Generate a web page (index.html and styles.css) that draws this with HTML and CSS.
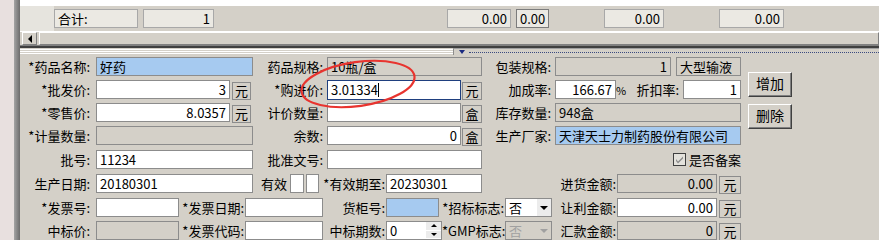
FILE: index.html
```html
<!DOCTYPE html>
<html>
  <head>
    <meta charset="utf-8">
    <title>药品入库</title>
    <link rel="stylesheet" href="styles.css">
  </head>
  <body>
    <div class="app">
      <div class="side"></div>
      <div class="edge"></div>
      <div class="main">
        <div class="grid-blank"></div>
        <div class="sum-row">
          <div class="ind"></div>
          <div class="cell c-title">合计:</div>
          <div class="cell num c-count">1</div>
          <div class="cell num c-amt1">0.00</div>
          <div class="cell num dark c-amt2">0.00</div>
          <div class="cell num c-amt3">0.00</div>
          <div class="cell num c-amt4">0.00</div>
        </div>
        <div class="hscroll">
          <div class="arrow-btn"><span class="tri-left"></span></div>
          <div class="thumb"></div>
        </div>
        <div class="dark-line"></div>
        <div class="splitter">
          <div class="grip"></div>
          <div class="handle"><span class="tri-blue"></span><span class="dots"></span></div>
        </div>

        <div class="form">
          <div class="fields">
            <div class="row">
              <div class="lbl w74">*药品名称:</div>
              <div class="fld bl w157 ml2">好药</div>
              <div class="lbl w74">药品规格:</div>
              <div class="fld ro w155">10瓶/盒</div>
              <div class="lbl w73">包装规格:</div>
              <div class="fld ro num w116">1</div>
              <div class="fld ro w65 ml5">大型输液</div>
            </div>
            <div class="row">
              <div class="lbl w74">*批发价:</div>
              <div class="fld wh num w134 ml2">3</div>
              <div class="unit w19 ml2">元</div>
              <div class="lbl w76">*购进价:</div>
              <div class="fld wh focus w134">3.01334<span class="caret"></span></div>
              <div class="unit w20 ml1">元</div>
              <div class="lbl w73">加成率:</div>
              <div class="fld wh num w61">166.67</div>
              <div class="pct">%</div>
              <div class="lbl w57">折扣率:</div>
              <div class="fld wh num w58">1</div>
            </div>
            <div class="row">
              <div class="lbl w74">*零售价:</div>
              <div class="fld wh num w134 ml2">8.0357</div>
              <div class="unit w19 ml2">元</div>
              <div class="lbl w76">计价数量:</div>
              <div class="fld wh w134"></div>
              <div class="unit w20 ml1">盒</div>
              <div class="lbl w73">库存数量:</div>
              <div class="fld ro w186">948盒</div>
            </div>
            <div class="row">
              <div class="lbl w74">*计量数量:</div>
              <div class="fld ro w157 ml2"></div>
              <div class="lbl w74">余数:</div>
              <div class="fld wh num w134">0</div>
              <div class="unit w20 ml1">盒</div>
              <div class="lbl w73">生产厂家:</div>
              <div class="fld bl w186">天津天士力制药股份有限公司</div>
            </div>
            <div class="row sp">
              <div class="lbl w74">批号:</div>
              <div class="fld wh w157 ml2">11234</div>
              <div class="lbl w74">批准文号:</div>
              <div class="fld wh w155"></div>
              <div class="check">
                <svg class="chk" width="13" height="13" viewBox="0 0 13 13">
                  <rect x="0.5" y="0.5" width="12" height="12" fill="#e4e2dc" stroke="#404040"/>
                  <path d="M3 6 L5 8.5 L10 3.5 L10 5.5 L5 10.5 L3 8 Z" fill="#8c8c8c"/>
                </svg>
                <span>是否备案</span>
              </div>
            </div>
            <div class="row sp">
              <div class="lbl w74">生产日期:</div>
              <div class="fld wh w157 ml2">20180301</div>
              <div class="lbl-l w37">有效</div>
              <div class="fld wh w14"></div>
              <div class="fld wh w13 ml2"></div>
              <div class="lbl tight w67">*有效期至:</div>
              <div class="fld wh w96">20230301</div>
              <div class="lbl tight w135">进货金额:</div>
              <div class="fld ro num w100">0.00</div>
              <div class="unit w22 ml2">元</div>
            </div>
            <div class="row sp">
              <div class="lbl w74">*发票号:</div>
              <div class="fld wh w83 ml2"></div>
              <div class="lbl tight w66">*发票日期:</div>
              <div class="fld wh w78"></div>
              <div class="lbl tight w63">货柜号:</div>
              <div class="fld bl w53"></div>
              <div class="lbl tight w66">*招标标志:</div>
              <div class="sel w47">
                <span class="sel-text">否</span>
                <span class="sel-btn"><span class="tri-down"></span></span>
              </div>
              <div class="lbl tight w65">让利金额:</div>
              <div class="fld wh num w100">0.00</div>
              <div class="unit w22 ml2">元</div>
            </div>
            <div class="row">
              <div class="lbl w74">中标价:</div>
              <div class="fld ro w83 ml2"></div>
              <div class="lbl tight w66">*发票代码:</div>
              <div class="fld wh w78"></div>
              <div class="lbl tight w63">中标期数:</div>
              <div class="spin w56">
                <span class="spin-text">0</span>
                <span class="spin-btns">
                  <span class="spin-b"><span class="tri-up"></span></span>
                  <span class="spin-b"><span class="tri-down"></span></span>
                </span>
              </div>
              <div class="lbl tight w63">*GMP标志:</div>
              <div class="sel off w47">
                <span class="sel-text">否</span>
                <span class="sel-btn"><span class="tri-down"></span></span>
              </div>
              <div class="lbl tight w65">汇款金额:</div>
              <div class="fld ro num w100">0</div>
              <div class="unit w22 ml2">元</div>
            </div>
          </div>

          <div class="buttons">
            <div class="btn">增加</div>
            <div class="btn">删除</div>
          </div>
        </div>
      </div>
    </div>

    <!-- red annotation circle drawn over the form -->
    <svg class="mark" width="130" height="60" viewBox="0 0 130 60">
      <ellipse cx="63" cy="29" rx="57" ry="22" transform="rotate(-8 63 29)" fill="none" stroke="#e8342f" stroke-width="2.2"/>
    </svg>
  </body>
</html>
```

FILE: styles.css
```css
body {
  margin: 0;
  background-color: #d4d0c8;
  font-family: "Noto Sans CJK SC", sans-serif;
  font-size: 13px;
  color: #000;
  overflow: hidden;
}
.app {
  display: flex;
  height: 240px;
}
.side {
  width: 14px;
  background-color: #e8e0df;
}
.edge {
  width: 6px;
  background: linear-gradient(to right, #a4a4a4, #6c6c6c);
}
.main {
  flex: 1;
  display: flex;
  flex-direction: column;
}

/* grid footer */
.grid-blank {
  height: 6px;
  background-color: #fff;
}
.sum-row {
  height: 25px;
  display: flex;
  align-items: center;
  border-bottom: 1px solid #fff;
}
.ind {
  width: 34px;
  height: 25px;
  background-color: #e6e4de;
}
.cell {
  box-sizing: border-box;
  height: 19px;
  line-height: 17px;
  padding: 0 3px;
  background-color: #ebe9e3;
  border: 1px solid #a8a8a8;
}
.cell.dark {
  border-color: #7c7c7c;
}
.c-title { width: 84px; }
.c-count { width: 71px; margin-left: 5px; }
.c-amt1 { width: 64px; margin-left: 233px; }
.c-amt2 { width: 33px; margin-left: 5px; }
.c-amt3 { width: 60px; margin-left: 55px; }
.c-amt4 { width: 65px; margin-left: 55px; }

.hscroll {
  height: 13px;
  display: flex;
}
.arrow-btn,
.thumb {
  box-sizing: border-box;
  border: 1px solid;
  border-color: #fff #808080 #808080 #fff;
}
.arrow-btn {
  width: 15px;
  margin-left: 2px;
  display: flex;
  align-items: center;
  justify-content: center;
}
.thumb {
  flex: 1;
  margin-left: 2px;
}
.tri-left {
  border-right: 4px solid #000;
  border-top: 4px solid transparent;
  border-bottom: 4px solid transparent;
}
.dark-line {
  height: 2px;
  background-color: #404040;
  border-top: 1px solid #808080;
}
.splitter {
  height: 7px;
  display: flex;
}
.grip {
  width: 433px;
  background: repeating-linear-gradient(#d4d0c8 0 1px, #fff 1px 2px);
}
.handle {
  flex: 1;
  box-sizing: border-box;
  border-left: 1px solid #8c8c8c;
  border-top: 1px solid #a0a0a0;
  display: flex;
  align-items: center;
  padding-left: 5px;
}
.tri-blue {
  border-top: 4px solid #1a2a80;
  border-left: 3px solid transparent;
  border-right: 3px solid transparent;
}
.dots {
  flex: 1;
  margin-left: 4px;
  border-top: 1px dotted #3a4a80;
}

/* form */
.form {
  display: flex;
  padding-top: 2px;
}
.fields {
  width: 721px;
  display: flex;
  flex-direction: column;
  gap: 4px;
}
.row {
  height: 19px;
  display: flex;
  align-items: center;
}
.row.sp {
  margin-top: 1px;
}
.lbl,
.lbl-l {
  flex: none;
  box-sizing: border-box;
  white-space: nowrap;
  line-height: 19px;
}
.lbl {
  text-align: right;
  padding-right: 4px;
}
.lbl.tight {
  padding-right: 1px;
}
.lbl-l {
  padding-left: 8px;
}
.fld {
  flex: none;
  box-sizing: border-box;
  height: 19px;
  line-height: 17px;
  padding: 0 3px;
  border: 1px solid #8c8c8c;
  white-space: nowrap;
  overflow: hidden;
}
.ro { background-color: #d4d0c8; }
.wh { background-color: #fff; }
.bl { background-color: #a6caf0; }
.num { text-align: right; }
.focus {
  border-color: #1f3f7f;
  height: 20px;
}
.caret {
  display: inline-block;
  width: 1px;
  height: 14px;
  background-color: #000;
  vertical-align: -2px;
}
.unit {
  flex: none;
  box-sizing: border-box;
  height: 18px;
  line-height: 16px;
  text-align: center;
  border: 1px solid #8c8c8c;
  margin-top: 2px;
}
.pct {
  width: 10px;
  text-align: center;
  font-size: 11px;
}
.check {
  flex: 1;
  display: flex;
  justify-content: flex-end;
  align-items: center;
  gap: 3px;
}
.sel,
.spin {
  flex: none;
  box-sizing: border-box;
  height: 19px;
  display: flex;
  border: 1px solid #8c8c8c;
  background-color: #fff;
}
.sel-text,
.spin-text {
  flex: 1;
  padding-left: 3px;
  line-height: 17px;
}
.sel-btn {
  width: 14px;
  background-color: #ececec;
  display: flex;
  align-items: center;
  justify-content: center;
}
.tri-down {
  border-top: 4px solid #000;
  border-left: 4px solid transparent;
  border-right: 4px solid transparent;
}
.tri-up {
  border-bottom: 4px solid #000;
  border-left: 4px solid transparent;
  border-right: 4px solid transparent;
}
.sel.off {
  background-color: #d4d0c8;
  color: #a0a0a0;
}
.sel.off .sel-btn {
  background-color: #d4d0c8;
}
.sel.off .tri-down {
  border-top-color: #a0a0a0;
}
.spin-btns {
  width: 15px;
  display: flex;
  flex-direction: column;
}
.spin-b {
  flex: 1;
  background-color: #ececec;
  display: flex;
  align-items: center;
  justify-content: center;
  border-bottom: 1px solid #fff;
}
.spin-b .tri-up,
.spin-b .tri-down {
  border-width: 3px;
}

.buttons {
  display: flex;
  flex-direction: column;
  gap: 7px;
  padding-top: 15px;
  margin-left: 7px;
}
.btn {
  box-sizing: border-box;
  width: 44px;
  height: 25px;
  line-height: 21px;
  text-align: center;
  font-size: 14px;
  border: 1px solid;
  border-color: #fff #404040 #404040 #fff;
  box-shadow: inset -1px -1px #808080;
}

.mark {
  position: absolute;
  left: 295px;
  top: 55px;
}

.w13 { width: 13px; }
.w14 { width: 14px; }
.w19 { width: 19px; }
.w20 { width: 20px; }
.w22 { width: 22px; }
.w37 { width: 37px; }
.w47 { width: 47px; }
.w53 { width: 53px; }
.w56 { width: 56px; }
.w57 { width: 57px; }
.w58 { width: 58px; }
.w61 { width: 61px; }
.w63 { width: 63px; }
.w65 { width: 65px; }
.w66 { width: 66px; }
.w67 { width: 67px; }
.w73 { width: 73px; }
.w74 { width: 74px; }
.w76 { width: 76px; }
.w78 { width: 78px; }
.w83 { width: 83px; }
.w96 { width: 96px; }
.w100 { width: 100px; }
.w116 { width: 116px; }
.w134 { width: 134px; }
.w135 { width: 135px; }
.w155 { width: 155px; }
.w157 { width: 157px; }
.w186 { width: 186px; }
.ml1 { margin-left: 1px; }
.ml2 { margin-left: 2px; }
.ml5 { margin-left: 5px; }
```
